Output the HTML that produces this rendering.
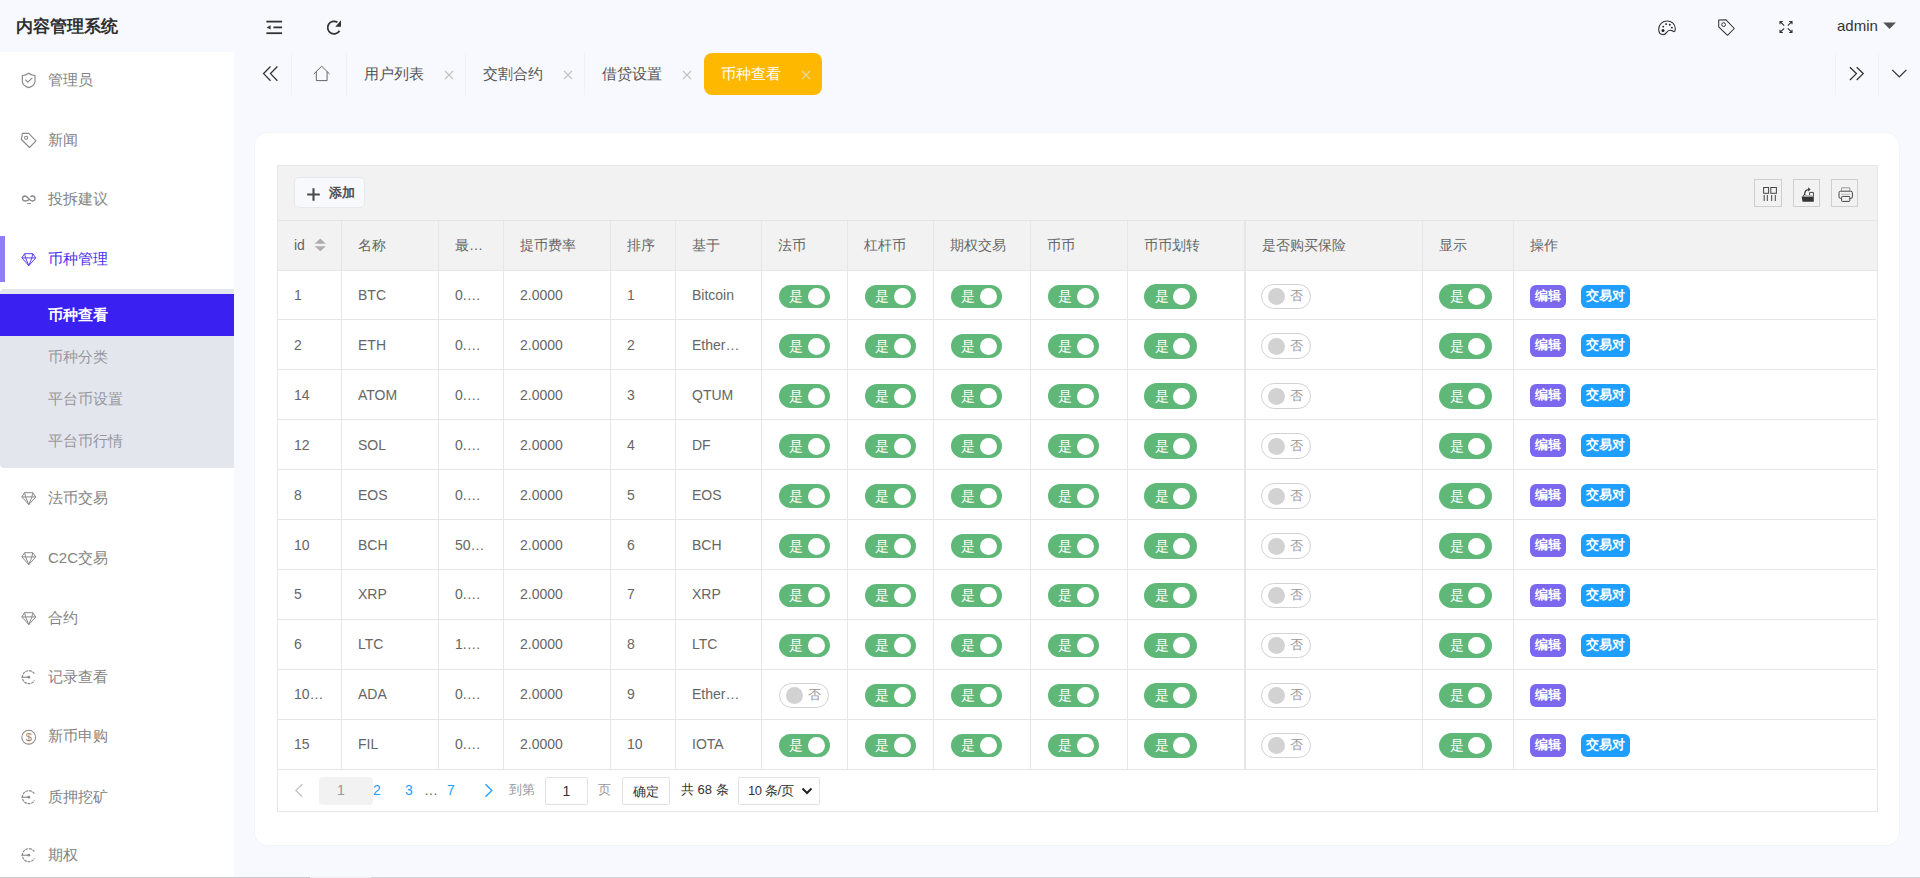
<!DOCTYPE html><html><head><meta charset="utf-8"><style>
*{margin:0;padding:0;box-sizing:border-box}
html,body{width:1920px;height:878px;overflow:hidden;background:#f8f9fe;font-family:"Liberation Sans",sans-serif;color:#666}
.a{position:absolute}
.nw{white-space:nowrap}
svg{position:absolute;overflow:visible}
#hdr{left:0;top:0;width:1920px;height:52px;background:#f8f9fe}
#logo{left:16px;top:15px;font-size:17px;font-weight:bold;color:#2f2f2f;line-height:24px;letter-spacing:0}
#side{left:0;top:52px;width:234px;height:826px;background:#fff}
.mi{left:48px;font-size:15px;line-height:20px;color:#838383}
.tab{top:53px;height:42px;line-height:42px;font-size:15px;color:#555}
.tx{color:#c2c2c2}
.div{width:1px;background:#f1f1f4;top:53px;height:42px}
#card{left:255px;top:133px;width:1644px;height:712px;background:#fff;border-radius:13px;box-shadow:0 0 0 1px #f3f4f8}
.vl{width:1px;background:#e6e6e6}
.hl{height:1px;background:#e6e6e6}
.th{top:221px;height:48px;line-height:48px;font-size:14px;color:#666}
.td{height:48px;line-height:48px;font-size:14px;color:#666;overflow:hidden;text-overflow:ellipsis;white-space:nowrap}
.swb{border-radius:13px;background:#5fb878}
.knob{width:17px;height:17px;border-radius:50%;background:#fff}
.swt{font-size:13.5px;line-height:24px;color:#fff}
.sfb{border-radius:13px;background:#fff;border:1px solid #d2d2d2}
.knoff{width:17px;height:17px;border-radius:50%;background:#d2d2d2}
.sft{font-size:13px;line-height:24px;color:#999}
.bt{height:23px;border-radius:6px;color:#fff;font-size:12.5px;font-weight:bold;line-height:22px;text-align:center}
</style></head><body>
<div id="hdr" class="a"></div>
<div id="logo" class="a nw">内容管理系统</div>
<svg style="left:262px;top:15px" width="24" height="24" viewBox="0 0 24 24"><g stroke="#333" stroke-width="1.8" fill="none"><line x1="4.4" y1="6.6" x2="20.1" y2="6.6"/><line x1="11.4" y1="12.4" x2="20.1" y2="12.4"/><line x1="4.4" y1="18.2" x2="20.1" y2="18.2"/></g><path d="M4.6 12.4 L8.6 10.2 L8.6 14.6 Z" fill="#333"/></svg>
<svg style="left:322px;top:15px" width="24" height="24" viewBox="0 0 24 24"><path d="M15.4 7.3 A6.3 6.3 0 1 0 17.5 15.7" stroke="#333" stroke-width="1.8" fill="none"/><path d="M19 5.2 L19 11.7 L13.3 11.7 Z" fill="#333"/></svg>
<svg style="left:1650px;top:10px" width="150" height="35" viewBox="1650 10 150 35"><path d="M1663.4 34.6 C1660.6 34.6 1658.7 32.4 1658.7 29.2 C1658.7 24.4 1662.4 21 1667.2 21 C1671.6 21 1675.3 24 1675.3 28.6 C1675.3 30.6 1674.8 31.6 1674 31.6 C1673 31.6 1672 30.3 1670.2 30.3 C1668.2 30.3 1667.2 31.4 1666.4 32.6 C1665.6 33.8 1664.7 34.6 1663.4 34.6 Z" stroke="#333" stroke-width="1.1" fill="none"/><circle cx="1663.3" cy="26.6" r="0.95" fill="#222"/><circle cx="1666.1" cy="24.1" r="0.95" fill="#222"/><circle cx="1669.8" cy="24.8" r="0.95" fill="#222"/><circle cx="1671.9" cy="27.6" r="0.95" fill="#222"/><circle cx="1663" cy="30.6" r="1.5" fill="#222"/><path d="M1718.7 19.9 L1725.8 19.7 L1734.3 28.5 L1727.5 35.3 L1718.7 26.8 Z" stroke="#333" stroke-width="1.05" fill="none" stroke-linejoin="round"/><circle cx="1723.6" cy="24.6" r="1.9" stroke="#333" stroke-width="1" fill="none"/><g stroke="#333" stroke-width="1.1" fill="none"><path d="M1782.8 21.5 H1780 V24.3 M1780 21.5 L1784.2 25.7"/><path d="M1789.2 21.5 H1792 V24.3 M1792 21.5 L1787.8 25.7"/><path d="M1782.8 32.5 H1780 V29.7 M1780 32.5 L1784.2 28.3"/><path d="M1789.2 32.5 H1792 V29.7 M1792 32.5 L1787.8 28.3"/></g></svg>
<div class="a nw" style="left:1837px;top:16px;font-size:15px;line-height:20px;color:#333">admin</div>
<svg style="left:1882px;top:22px" width="15" height="8" viewBox="0 0 15 8"><path d="M1.2 0.6 L13.9 0.6 L7.55 6.9 Z" fill="#555"/></svg>
<div id="side" class="a"></div>
<div class="a" style="left:0;top:236px;width:5px;height:46px;background:#8f7ef8"></div>
<svg style="left:19px;top:71px" width="18" height="18" viewBox="0 0 18 18"><path d="M9.7 2.3 C8 3.6 5.6 4.4 3.4 4.5 L3.4 10.4 C3.4 13.4 6.2 15.3 9.7 16.6 C13.2 15.3 16 13.4 16 10.4 L16 4.5 C13.8 4.4 11.4 3.6 9.7 2.3 Z" stroke="#8a8a8a" stroke-width="1.15" fill="none"/><path d="M6.3 8.7 L8.8 11.2 L13.4 6.9" stroke="#8a8a8a" stroke-width="1.15" fill="none"/></svg>
<div class="a mi nw" style="top:70px;color:#838383">管理员</div>
<svg style="left:19px;top:131px" width="18" height="18" viewBox="0 0 18 18"><path d="M3.4 2.4 L9.7 2.4 L17 9.8 L10.5 16.5 L2.4 8.5 Z" stroke="#8a8a8a" stroke-width="1.15" fill="none" stroke-linejoin="round"/><circle cx="7.1" cy="6.8" r="1.6" stroke="#8a8a8a" stroke-width="1.05" fill="none"/></svg>
<div class="a mi nw" style="top:130px;color:#838383">新闻</div>
<svg style="left:19px;top:190px" width="18" height="18" viewBox="0 0 18 18"><path d="M10.2 9.4 C9 10.5 7.8 11 6.2 11 C4.6 11 3.5 9.9 3.5 8.5 C3.5 7.1 4.6 6 6.2 6 C8.4 6 10.6 11 13.4 11 C15 11 16 9.9 16 8.5 C16 7.1 15 6 13.4 6 C12.6 6 12 6.3 11.4 6.8" stroke="#8a8a8a" stroke-width="1.3" fill="none"/><line x1="8.2" y1="13.5" x2="11.8" y2="13.5" stroke="#8a8a8a" stroke-width="1.1"/></svg>
<div class="a mi nw" style="top:189px;color:#838383">投拆建议</div>
<svg style="left:19px;top:249.5px" width="18" height="18" viewBox="0 0 18 18"><g stroke="#5a3ff2" stroke-width="1" fill="none" stroke-linejoin="round"><path d="M5.6 3.7 L13.7 3.7 L16.8 7.9 L9.8 15.6 L2.8 7.9 Z"/><path d="M2.8 7.9 L16.8 7.9"/><path d="M5.6 3.7 L6.6 7.9 L9.8 15.6 L12.9 7.9 L13.7 3.7"/></g></svg>
<div class="a mi nw" style="top:248.5px;color:#4a2ff0">币种管理</div>
<svg style="left:19px;top:489px" width="18" height="18" viewBox="0 0 18 18"><g stroke="#8a8a8a" stroke-width="1" fill="none" stroke-linejoin="round"><path d="M5.6 3.7 L13.7 3.7 L16.8 7.9 L9.8 15.6 L2.8 7.9 Z"/><path d="M2.8 7.9 L16.8 7.9"/><path d="M5.6 3.7 L6.6 7.9 L9.8 15.6 L12.9 7.9 L13.7 3.7"/></g></svg>
<div class="a mi nw" style="top:488px;color:#838383">法币交易</div>
<svg style="left:19px;top:549px" width="18" height="18" viewBox="0 0 18 18"><g stroke="#8a8a8a" stroke-width="1" fill="none" stroke-linejoin="round"><path d="M5.6 3.7 L13.7 3.7 L16.8 7.9 L9.8 15.6 L2.8 7.9 Z"/><path d="M2.8 7.9 L16.8 7.9"/><path d="M5.6 3.7 L6.6 7.9 L9.8 15.6 L12.9 7.9 L13.7 3.7"/></g></svg>
<div class="a mi nw" style="top:548px;color:#838383">C2C交易</div>
<svg style="left:19px;top:608.5px" width="18" height="18" viewBox="0 0 18 18"><g stroke="#8a8a8a" stroke-width="1" fill="none" stroke-linejoin="round"><path d="M5.6 3.7 L13.7 3.7 L16.8 7.9 L9.8 15.6 L2.8 7.9 Z"/><path d="M2.8 7.9 L16.8 7.9"/><path d="M5.6 3.7 L6.6 7.9 L9.8 15.6 L12.9 7.9 L13.7 3.7"/></g></svg>
<div class="a mi nw" style="top:607.5px;color:#838383">合约</div>
<svg style="left:19px;top:668px" width="18" height="18" viewBox="0 0 18 18"><path d="M15.4 5.8 A6.5 6.5 0 1 0 15.5 12.4" stroke="#8a8a8a" stroke-width="1.15" fill="none" stroke-dasharray="2.8 0.8"/><line x1="2.4" y1="9.2" x2="9.6" y2="9.2" stroke="#8a8a8a" stroke-width="1.15"/><circle cx="9.8" cy="9.2" r="1.4" fill="#8a8a8a"/></svg>
<div class="a mi nw" style="top:667px;color:#838383">记录查看</div>
<svg style="left:19px;top:727px" width="18" height="18" viewBox="0 0 18 18"><circle cx="9.7" cy="10.2" r="6.9" stroke="#8a8a8a" stroke-width="1.05" fill="none"/><text x="9.7" y="14.2" font-size="11" text-anchor="middle" fill="#8a8a8a" font-family="Liberation Sans">$</text></svg>
<div class="a mi nw" style="top:726px;color:#838383">新币申购</div>
<svg style="left:19px;top:787.5px" width="18" height="18" viewBox="0 0 18 18"><path d="M15.4 5.8 A6.5 6.5 0 1 0 15.5 12.4" stroke="#8a8a8a" stroke-width="1.15" fill="none" stroke-dasharray="2.8 0.8"/><line x1="2.4" y1="9.2" x2="9.6" y2="9.2" stroke="#8a8a8a" stroke-width="1.15"/><circle cx="9.8" cy="9.2" r="1.4" fill="#8a8a8a"/></svg>
<div class="a mi nw" style="top:786.5px;color:#838383">质押挖矿</div>
<svg style="left:19px;top:846px" width="18" height="18" viewBox="0 0 18 18"><path d="M15.4 5.8 A6.5 6.5 0 1 0 15.5 12.4" stroke="#8a8a8a" stroke-width="1.15" fill="none" stroke-dasharray="2.8 0.8"/><line x1="2.4" y1="9.2" x2="9.6" y2="9.2" stroke="#8a8a8a" stroke-width="1.15"/><circle cx="9.8" cy="9.2" r="1.4" fill="#8a8a8a"/></svg>
<div class="a mi nw" style="top:845px;color:#838383">期权</div>
<div class="a" style="left:0;top:289px;width:234px;height:179px;background:#e4e6ee;border-radius:4px 0 0 4px"></div>
<div class="a" style="left:0;top:294px;width:234px;height:42px;background:#3b20f2"></div>
<div class="a mi nw" style="top:305px;color:#fff;font-weight:bold">币种查看</div>
<div class="a mi nw" style="top:347px;color:#97989c">币种分类</div>
<div class="a mi nw" style="top:389px;color:#97989c">平台币设置</div>
<div class="a mi nw" style="top:431px;color:#97989c">平台币行情</div>
<svg style="left:260px;top:64px" width="20" height="20" viewBox="0 0 20 20"><g stroke="#333" stroke-width="1.3" fill="none"><path d="M10.5 2.5 L3.6 9.6 L10.5 16.7"/><path d="M17.4 2.5 L10.5 9.6 L17.4 16.7"/></g></svg>
<div class="a div" style="left:291px"></div>
<div class="a div" style="left:346px"></div>
<div class="a div" style="left:465px"></div>
<div class="a div" style="left:584px"></div>
<svg style="left:311px;top:63px" width="21" height="20" viewBox="0 0 21 20"><path d="M2.8 11 L10.7 3.2 L18.6 11" stroke="#666" stroke-width="1" fill="none"/><path d="M5.3 8.6 L5.3 17.6 L16.1 17.6 L16.1 8.6" stroke="#666" stroke-width="1" fill="none"/></svg>
<div class="a tab nw" style="left:363.5px">用户列表</div>
<svg style="left:443.5px;top:70px" width="10" height="10" viewBox="0 0 10 10"><path d="M1 1 L9 9 M9 1 L1 9" stroke="#c2c2c2" stroke-width="1.1"/></svg>
<div class="a tab nw" style="left:482.5px">交割合约</div>
<svg style="left:562.5px;top:70px" width="10" height="10" viewBox="0 0 10 10"><path d="M1 1 L9 9 M9 1 L1 9" stroke="#c2c2c2" stroke-width="1.1"/></svg>
<div class="a tab nw" style="left:601.5px">借贷设置</div>
<svg style="left:681.5px;top:70px" width="10" height="10" viewBox="0 0 10 10"><path d="M1 1 L9 9 M9 1 L1 9" stroke="#c2c2c2" stroke-width="1.1"/></svg>
<div class="a" style="left:704px;top:53px;width:118px;height:42px;background:#ffb800;border-radius:8px"></div>
<div class="a tab nw" style="left:721px;color:#fff">币种查看</div>
<svg style="left:801px;top:70px" width="10" height="10" viewBox="0 0 10 10"><path d="M1 1 L9 9 M9 1 L1 9" stroke="#e8d8a8" stroke-width="1.1"/></svg>
<div class="a div" style="left:1835px"></div><div class="a div" style="left:1878px"></div>
<svg style="left:1846px;top:64px" width="20" height="20" viewBox="0 0 20 20"><g stroke="#333" stroke-width="1.3" fill="none"><path d="M3.9 3.2 L10.4 9.6 L3.9 16"/><path d="M10.7 3.2 L17.2 9.6 L10.7 16"/></g></svg>
<svg style="left:1889px;top:64px" width="20" height="20" viewBox="0 0 20 20"><path d="M3.2 5.9 L10.3 12.9 L17.4 5.9" stroke="#333" stroke-width="1.3" fill="none"/></svg>
<div id="card" class="a"></div>
<div class="a" style="left:277px;top:165px;width:1601px;height:647px;border:1px solid #e6e6e6;background:#fff"></div>
<div class="a" style="left:278px;top:166px;width:1599px;height:104px;background:#f2f2f2"></div>
<div class="a hl" style="left:278px;top:220px;width:1599px"></div>
<div class="a hl" style="left:278px;top:270px;width:1599px"></div>
<div class="a hl" style="left:278px;top:319px;width:1598px"></div>
<div class="a hl" style="left:278px;top:369px;width:1598px"></div>
<div class="a hl" style="left:278px;top:419px;width:1598px"></div>
<div class="a hl" style="left:278px;top:469px;width:1598px"></div>
<div class="a hl" style="left:278px;top:519px;width:1598px"></div>
<div class="a hl" style="left:278px;top:569px;width:1598px"></div>
<div class="a hl" style="left:278px;top:619px;width:1598px"></div>
<div class="a hl" style="left:278px;top:669px;width:1598px"></div>
<div class="a hl" style="left:278px;top:719px;width:1598px"></div>
<div class="a hl" style="left:278px;top:769px;width:1598px"></div>
<div class="a vl" style="left:341px;top:221px;height:548px"></div>
<div class="a vl" style="left:438px;top:221px;height:548px"></div>
<div class="a vl" style="left:503px;top:221px;height:548px"></div>
<div class="a vl" style="left:610px;top:221px;height:548px"></div>
<div class="a vl" style="left:675px;top:221px;height:548px"></div>
<div class="a vl" style="left:761px;top:221px;height:548px"></div>
<div class="a vl" style="left:847px;top:221px;height:548px"></div>
<div class="a vl" style="left:933px;top:221px;height:548px"></div>
<div class="a vl" style="left:1030px;top:221px;height:548px"></div>
<div class="a vl" style="left:1127px;top:221px;height:548px"></div>
<div class="a vl" style="left:1244px;top:221px;height:548px"></div>
<div class="a vl" style="left:1422px;top:221px;height:548px"></div>
<div class="a vl" style="left:1513px;top:221px;height:548px"></div>
<div class="a vl" style="left:1245px;top:221px;height:548px"></div>
<div class="a" style="left:294px;top:177px;width:71px;height:31px;background:#f8f9fd;border:1px solid #e4eaec;border-radius:5px"></div>
<svg style="left:306px;top:186.5px" width="15" height="15" viewBox="0 0 15 15"><path d="M7.5 1.2 V13.8 M1.2 7.5 H13.8" stroke="#4a4a4a" stroke-width="2.1"/></svg>
<div class="a nw" style="left:329px;top:183px;font-size:13px;line-height:20px;color:#505050;font-weight:bold">添加</div>
<div class="a" style="left:1754px;top:179px;width:28px;height:28px;border:1px solid #cfcfcf"></div>
<div class="a" style="left:1793px;top:179px;width:27px;height:28px;border:1px solid #cfcfcf"></div>
<div class="a" style="left:1831px;top:179px;width:27px;height:28px;border:1px solid #cfcfcf"></div>
<svg style="left:1754px;top:179px" width="28" height="28" viewBox="1754 179 28 28"><g stroke="#444" stroke-width="1" fill="none"><rect x="1763.6" y="187.5" width="5" height="5.8"/><rect x="1770.8" y="187.5" width="5.6" height="5.8"/><path d="M1764.2 195 V201 M1767.3 195 V201 M1771.7 195 V201 M1775.3 195 V201"/></g></svg>
<svg style="left:1793px;top:179px" width="28" height="28" viewBox="1793 179 28 28"><path d="M1801.6 196.4 L1813.8 196.4 L1813.8 201.8 L1802.6 201.8 Z" fill="#333"/><path d="M1803.5 196.4 L1803.5 195.2 L1806 195.2 M1809.6 195.2 L1809.6 192.4 L1813.4 192.4 L1813.4 196.4" stroke="#444" stroke-width="1" fill="none"/><rect x="1804.2" y="195" width="8" height="1.4" fill="#bbb"/><path d="M1804.6 195 C1804.6 191.6 1806 189.6 1808.6 189.6" stroke="#333" stroke-width="1.2" fill="none"/><path d="M1808.2 187.3 L1810.6 189.4 L1808.2 191.6 Z" fill="#333"/></svg>
<svg style="left:1831px;top:179px" width="28" height="28" viewBox="1831 179 28 28"><g fill="none" stroke-width="1"><path d="M1841.6 190.8 V187.8 H1849.8 V190.8" stroke="#999"/><rect x="1839" y="191.2" width="13.4" height="7.2" rx="1.6" stroke="#444"/><path d="M1841 194.2 H1850.4" stroke="#bbb"/><rect x="1841.6" y="196.4" width="8.2" height="5" rx="0.8" stroke="#444" fill="#f2f2f2"/></g></svg>
<div class="a th nw" style="left:294px">id</div>
<div class="a th nw" style="left:358px">名称</div>
<div class="a th nw" style="left:455px">最…</div>
<div class="a th nw" style="left:520px">提币费率</div>
<div class="a th nw" style="left:627px">排序</div>
<div class="a th nw" style="left:692px">基于</div>
<div class="a th nw" style="left:778px">法币</div>
<div class="a th nw" style="left:864px">杠杆币</div>
<div class="a th nw" style="left:950px">期权交易</div>
<div class="a th nw" style="left:1047px">币币</div>
<div class="a th nw" style="left:1144px">币币划转</div>
<div class="a th nw" style="left:1262px">是否购买保险</div>
<div class="a th nw" style="left:1439px">显示</div>
<div class="a th nw" style="left:1530px">操作</div>
<svg style="left:314px;top:238px" width="13" height="14" viewBox="0 0 13 14"><path d="M6.3 0.6 L11.9 5.7 L0.7 5.7 Z M6.3 13.3 L11.9 8.3 L0.7 8.3 Z" fill="#adadad"/></svg>
<div class="a td" style="left:294px;top:271px;width:32px">1</div>
<div class="a td" style="left:358px;top:271px;width:65px">BTC</div>
<div class="a td" style="left:455px;top:271px;width:33px">0.0010</div>
<div class="a td" style="left:520px;top:271px;width:75px">2.0000</div>
<div class="a td" style="left:627px;top:271px;width:33px">1</div>
<div class="a td" style="left:692px;top:271px;width:54px">Bitcoin</div>
<div class="a swb" style="left:779px;top:285px;width:51px;height:23px"></div><div class="a knob" style="left:808px;top:288px"></div><div class="a swt" style="left:789px;top:285.0px">是</div>
<div class="a swb" style="left:865px;top:285px;width:51px;height:23px"></div><div class="a knob" style="left:894px;top:288px"></div><div class="a swt" style="left:875px;top:285.0px">是</div>
<div class="a swb" style="left:951px;top:285px;width:51px;height:23px"></div><div class="a knob" style="left:980px;top:288px"></div><div class="a swt" style="left:961px;top:285.0px">是</div>
<div class="a swb" style="left:1048px;top:285px;width:51px;height:23px"></div><div class="a knob" style="left:1077px;top:288px"></div><div class="a swt" style="left:1058px;top:285.0px">是</div>
<div class="a swb" style="left:1144px;top:284px;width:53px;height:25px"></div><div class="a knob" style="left:1173px;top:288px"></div><div class="a swt" style="left:1155px;top:285.0px">是</div>
<div class="a sfb" style="left:1261px;top:284px;width:50px;height:25px"></div><div class="a knoff" style="left:1268px;top:288px"></div><div class="a sft" style="left:1290px;top:284.0px">否</div>
<div class="a swb" style="left:1439px;top:284px;width:53px;height:25px"></div><div class="a knob" style="left:1468px;top:288px"></div><div class="a swt" style="left:1450px;top:285.0px">是</div>
<div class="a bt" style="left:1530px;top:285px;width:36px;background:#7b68ee">编辑</div>
<div class="a bt" style="left:1581px;top:285px;width:49px;background:#1e9fff">交易对</div>
<div class="a td" style="left:294px;top:321px;width:32px">2</div>
<div class="a td" style="left:358px;top:321px;width:65px">ETH</div>
<div class="a td" style="left:455px;top:321px;width:33px">0.0100</div>
<div class="a td" style="left:520px;top:321px;width:75px">2.0000</div>
<div class="a td" style="left:627px;top:321px;width:33px">2</div>
<div class="a td" style="left:692px;top:321px;width:54px">Ethereum</div>
<div class="a swb" style="left:779px;top:334px;width:51px;height:24px"></div><div class="a knob" style="left:808px;top:338px"></div><div class="a swt" style="left:789px;top:335.0px">是</div>
<div class="a swb" style="left:865px;top:334px;width:51px;height:24px"></div><div class="a knob" style="left:894px;top:338px"></div><div class="a swt" style="left:875px;top:335.0px">是</div>
<div class="a swb" style="left:951px;top:334px;width:51px;height:24px"></div><div class="a knob" style="left:980px;top:338px"></div><div class="a swt" style="left:961px;top:335.0px">是</div>
<div class="a swb" style="left:1048px;top:334px;width:51px;height:24px"></div><div class="a knob" style="left:1077px;top:338px"></div><div class="a swt" style="left:1058px;top:335.0px">是</div>
<div class="a swb" style="left:1144px;top:333px;width:53px;height:26px"></div><div class="a knob" style="left:1173px;top:338px"></div><div class="a swt" style="left:1155px;top:335.0px">是</div>
<div class="a sfb" style="left:1261px;top:333px;width:50px;height:26px"></div><div class="a knoff" style="left:1268px;top:338px"></div><div class="a sft" style="left:1290px;top:334.0px">否</div>
<div class="a swb" style="left:1439px;top:333px;width:53px;height:26px"></div><div class="a knob" style="left:1468px;top:338px"></div><div class="a swt" style="left:1450px;top:335.0px">是</div>
<div class="a bt" style="left:1530px;top:334px;width:36px;background:#7b68ee">编辑</div>
<div class="a bt" style="left:1581px;top:334px;width:49px;background:#1e9fff">交易对</div>
<div class="a td" style="left:294px;top:371px;width:32px">14</div>
<div class="a td" style="left:358px;top:371px;width:65px">ATOM</div>
<div class="a td" style="left:455px;top:371px;width:33px">0.0100</div>
<div class="a td" style="left:520px;top:371px;width:75px">2.0000</div>
<div class="a td" style="left:627px;top:371px;width:33px">3</div>
<div class="a td" style="left:692px;top:371px;width:54px">QTUM</div>
<div class="a swb" style="left:779px;top:384px;width:51px;height:24px"></div><div class="a knob" style="left:808px;top:388px"></div><div class="a swt" style="left:789px;top:385.0px">是</div>
<div class="a swb" style="left:865px;top:384px;width:51px;height:24px"></div><div class="a knob" style="left:894px;top:388px"></div><div class="a swt" style="left:875px;top:385.0px">是</div>
<div class="a swb" style="left:951px;top:384px;width:51px;height:24px"></div><div class="a knob" style="left:980px;top:388px"></div><div class="a swt" style="left:961px;top:385.0px">是</div>
<div class="a swb" style="left:1048px;top:384px;width:51px;height:24px"></div><div class="a knob" style="left:1077px;top:388px"></div><div class="a swt" style="left:1058px;top:385.0px">是</div>
<div class="a swb" style="left:1144px;top:383px;width:53px;height:26px"></div><div class="a knob" style="left:1173px;top:388px"></div><div class="a swt" style="left:1155px;top:385.0px">是</div>
<div class="a sfb" style="left:1261px;top:383px;width:50px;height:26px"></div><div class="a knoff" style="left:1268px;top:388px"></div><div class="a sft" style="left:1290px;top:384.0px">否</div>
<div class="a swb" style="left:1439px;top:383px;width:53px;height:26px"></div><div class="a knob" style="left:1468px;top:388px"></div><div class="a swt" style="left:1450px;top:385.0px">是</div>
<div class="a bt" style="left:1530px;top:384px;width:36px;background:#7b68ee">编辑</div>
<div class="a bt" style="left:1581px;top:384px;width:49px;background:#1e9fff">交易对</div>
<div class="a td" style="left:294px;top:421px;width:32px">12</div>
<div class="a td" style="left:358px;top:421px;width:65px">SOL</div>
<div class="a td" style="left:455px;top:421px;width:33px">0.0100</div>
<div class="a td" style="left:520px;top:421px;width:75px">2.0000</div>
<div class="a td" style="left:627px;top:421px;width:33px">4</div>
<div class="a td" style="left:692px;top:421px;width:54px">DF</div>
<div class="a swb" style="left:779px;top:434px;width:51px;height:24px"></div><div class="a knob" style="left:808px;top:438px"></div><div class="a swt" style="left:789px;top:435.0px">是</div>
<div class="a swb" style="left:865px;top:434px;width:51px;height:24px"></div><div class="a knob" style="left:894px;top:438px"></div><div class="a swt" style="left:875px;top:435.0px">是</div>
<div class="a swb" style="left:951px;top:434px;width:51px;height:24px"></div><div class="a knob" style="left:980px;top:438px"></div><div class="a swt" style="left:961px;top:435.0px">是</div>
<div class="a swb" style="left:1048px;top:434px;width:51px;height:24px"></div><div class="a knob" style="left:1077px;top:438px"></div><div class="a swt" style="left:1058px;top:435.0px">是</div>
<div class="a swb" style="left:1144px;top:433px;width:53px;height:26px"></div><div class="a knob" style="left:1173px;top:438px"></div><div class="a swt" style="left:1155px;top:435.0px">是</div>
<div class="a sfb" style="left:1261px;top:433px;width:50px;height:26px"></div><div class="a knoff" style="left:1268px;top:438px"></div><div class="a sft" style="left:1290px;top:434.0px">否</div>
<div class="a swb" style="left:1439px;top:433px;width:53px;height:26px"></div><div class="a knob" style="left:1468px;top:438px"></div><div class="a swt" style="left:1450px;top:435.0px">是</div>
<div class="a bt" style="left:1530px;top:434px;width:36px;background:#7b68ee">编辑</div>
<div class="a bt" style="left:1581px;top:434px;width:49px;background:#1e9fff">交易对</div>
<div class="a td" style="left:294px;top:471px;width:32px">8</div>
<div class="a td" style="left:358px;top:471px;width:65px">EOS</div>
<div class="a td" style="left:455px;top:471px;width:33px">0.0100</div>
<div class="a td" style="left:520px;top:471px;width:75px">2.0000</div>
<div class="a td" style="left:627px;top:471px;width:33px">5</div>
<div class="a td" style="left:692px;top:471px;width:54px">EOS</div>
<div class="a swb" style="left:779px;top:484px;width:51px;height:24px"></div><div class="a knob" style="left:808px;top:488px"></div><div class="a swt" style="left:789px;top:485.0px">是</div>
<div class="a swb" style="left:865px;top:484px;width:51px;height:24px"></div><div class="a knob" style="left:894px;top:488px"></div><div class="a swt" style="left:875px;top:485.0px">是</div>
<div class="a swb" style="left:951px;top:484px;width:51px;height:24px"></div><div class="a knob" style="left:980px;top:488px"></div><div class="a swt" style="left:961px;top:485.0px">是</div>
<div class="a swb" style="left:1048px;top:484px;width:51px;height:24px"></div><div class="a knob" style="left:1077px;top:488px"></div><div class="a swt" style="left:1058px;top:485.0px">是</div>
<div class="a swb" style="left:1144px;top:483px;width:53px;height:26px"></div><div class="a knob" style="left:1173px;top:488px"></div><div class="a swt" style="left:1155px;top:485.0px">是</div>
<div class="a sfb" style="left:1261px;top:483px;width:50px;height:26px"></div><div class="a knoff" style="left:1268px;top:488px"></div><div class="a sft" style="left:1290px;top:484.0px">否</div>
<div class="a swb" style="left:1439px;top:483px;width:53px;height:26px"></div><div class="a knob" style="left:1468px;top:488px"></div><div class="a swt" style="left:1450px;top:485.0px">是</div>
<div class="a bt" style="left:1530px;top:484px;width:36px;background:#7b68ee">编辑</div>
<div class="a bt" style="left:1581px;top:484px;width:49px;background:#1e9fff">交易对</div>
<div class="a td" style="left:294px;top:521px;width:32px">10</div>
<div class="a td" style="left:358px;top:521px;width:65px">BCH</div>
<div class="a td" style="left:455px;top:521px;width:33px">50.000</div>
<div class="a td" style="left:520px;top:521px;width:75px">2.0000</div>
<div class="a td" style="left:627px;top:521px;width:33px">6</div>
<div class="a td" style="left:692px;top:521px;width:54px">BCH</div>
<div class="a swb" style="left:779px;top:534px;width:51px;height:24px"></div><div class="a knob" style="left:808px;top:538px"></div><div class="a swt" style="left:789px;top:535.0px">是</div>
<div class="a swb" style="left:865px;top:534px;width:51px;height:24px"></div><div class="a knob" style="left:894px;top:538px"></div><div class="a swt" style="left:875px;top:535.0px">是</div>
<div class="a swb" style="left:951px;top:534px;width:51px;height:24px"></div><div class="a knob" style="left:980px;top:538px"></div><div class="a swt" style="left:961px;top:535.0px">是</div>
<div class="a swb" style="left:1048px;top:534px;width:51px;height:24px"></div><div class="a knob" style="left:1077px;top:538px"></div><div class="a swt" style="left:1058px;top:535.0px">是</div>
<div class="a swb" style="left:1144px;top:533px;width:53px;height:26px"></div><div class="a knob" style="left:1173px;top:538px"></div><div class="a swt" style="left:1155px;top:535.0px">是</div>
<div class="a sfb" style="left:1261px;top:533px;width:50px;height:26px"></div><div class="a knoff" style="left:1268px;top:538px"></div><div class="a sft" style="left:1290px;top:534.0px">否</div>
<div class="a swb" style="left:1439px;top:533px;width:53px;height:26px"></div><div class="a knob" style="left:1468px;top:538px"></div><div class="a swt" style="left:1450px;top:535.0px">是</div>
<div class="a bt" style="left:1530px;top:534px;width:36px;background:#7b68ee">编辑</div>
<div class="a bt" style="left:1581px;top:534px;width:49px;background:#1e9fff">交易对</div>
<div class="a td" style="left:294px;top:570px;width:32px">5</div>
<div class="a td" style="left:358px;top:570px;width:65px">XRP</div>
<div class="a td" style="left:455px;top:570px;width:33px">0.0100</div>
<div class="a td" style="left:520px;top:570px;width:75px">2.0000</div>
<div class="a td" style="left:627px;top:570px;width:33px">7</div>
<div class="a td" style="left:692px;top:570px;width:54px">XRP</div>
<div class="a swb" style="left:779px;top:584px;width:51px;height:23px"></div><div class="a knob" style="left:808px;top:587px"></div><div class="a swt" style="left:789px;top:584.0px">是</div>
<div class="a swb" style="left:865px;top:584px;width:51px;height:23px"></div><div class="a knob" style="left:894px;top:587px"></div><div class="a swt" style="left:875px;top:584.0px">是</div>
<div class="a swb" style="left:951px;top:584px;width:51px;height:23px"></div><div class="a knob" style="left:980px;top:587px"></div><div class="a swt" style="left:961px;top:584.0px">是</div>
<div class="a swb" style="left:1048px;top:584px;width:51px;height:23px"></div><div class="a knob" style="left:1077px;top:587px"></div><div class="a swt" style="left:1058px;top:584.0px">是</div>
<div class="a swb" style="left:1144px;top:583px;width:53px;height:25px"></div><div class="a knob" style="left:1173px;top:587px"></div><div class="a swt" style="left:1155px;top:584.0px">是</div>
<div class="a sfb" style="left:1261px;top:583px;width:50px;height:25px"></div><div class="a knoff" style="left:1268px;top:587px"></div><div class="a sft" style="left:1290px;top:583.0px">否</div>
<div class="a swb" style="left:1439px;top:583px;width:53px;height:25px"></div><div class="a knob" style="left:1468px;top:587px"></div><div class="a swt" style="left:1450px;top:584.0px">是</div>
<div class="a bt" style="left:1530px;top:584px;width:36px;background:#7b68ee">编辑</div>
<div class="a bt" style="left:1581px;top:584px;width:49px;background:#1e9fff">交易对</div>
<div class="a td" style="left:294px;top:620px;width:32px">6</div>
<div class="a td" style="left:358px;top:620px;width:65px">LTC</div>
<div class="a td" style="left:455px;top:620px;width:33px">1.0000</div>
<div class="a td" style="left:520px;top:620px;width:75px">2.0000</div>
<div class="a td" style="left:627px;top:620px;width:33px">8</div>
<div class="a td" style="left:692px;top:620px;width:54px">LTC</div>
<div class="a swb" style="left:779px;top:634px;width:51px;height:23px"></div><div class="a knob" style="left:808px;top:637px"></div><div class="a swt" style="left:789px;top:634.0px">是</div>
<div class="a swb" style="left:865px;top:634px;width:51px;height:23px"></div><div class="a knob" style="left:894px;top:637px"></div><div class="a swt" style="left:875px;top:634.0px">是</div>
<div class="a swb" style="left:951px;top:634px;width:51px;height:23px"></div><div class="a knob" style="left:980px;top:637px"></div><div class="a swt" style="left:961px;top:634.0px">是</div>
<div class="a swb" style="left:1048px;top:634px;width:51px;height:23px"></div><div class="a knob" style="left:1077px;top:637px"></div><div class="a swt" style="left:1058px;top:634.0px">是</div>
<div class="a swb" style="left:1144px;top:633px;width:53px;height:25px"></div><div class="a knob" style="left:1173px;top:637px"></div><div class="a swt" style="left:1155px;top:634.0px">是</div>
<div class="a sfb" style="left:1261px;top:633px;width:50px;height:25px"></div><div class="a knoff" style="left:1268px;top:637px"></div><div class="a sft" style="left:1290px;top:633.0px">否</div>
<div class="a swb" style="left:1439px;top:633px;width:53px;height:25px"></div><div class="a knob" style="left:1468px;top:637px"></div><div class="a swt" style="left:1450px;top:634.0px">是</div>
<div class="a bt" style="left:1530px;top:634px;width:36px;background:#7b68ee">编辑</div>
<div class="a bt" style="left:1581px;top:634px;width:49px;background:#1e9fff">交易对</div>
<div class="a td" style="left:294px;top:670px;width:32px">10000</div>
<div class="a td" style="left:358px;top:670px;width:65px">ADA</div>
<div class="a td" style="left:455px;top:670px;width:33px">0.0100</div>
<div class="a td" style="left:520px;top:670px;width:75px">2.0000</div>
<div class="a td" style="left:627px;top:670px;width:33px">9</div>
<div class="a td" style="left:692px;top:670px;width:54px">Ethereum</div>
<div class="a sfb" style="left:779px;top:683px;width:50px;height:25px"></div><div class="a knoff" style="left:786px;top:687px"></div><div class="a sft" style="left:808px;top:683.0px">否</div>
<div class="a swb" style="left:865px;top:684px;width:51px;height:23px"></div><div class="a knob" style="left:894px;top:687px"></div><div class="a swt" style="left:875px;top:684.0px">是</div>
<div class="a swb" style="left:951px;top:684px;width:51px;height:23px"></div><div class="a knob" style="left:980px;top:687px"></div><div class="a swt" style="left:961px;top:684.0px">是</div>
<div class="a swb" style="left:1048px;top:684px;width:51px;height:23px"></div><div class="a knob" style="left:1077px;top:687px"></div><div class="a swt" style="left:1058px;top:684.0px">是</div>
<div class="a swb" style="left:1144px;top:683px;width:53px;height:25px"></div><div class="a knob" style="left:1173px;top:687px"></div><div class="a swt" style="left:1155px;top:684.0px">是</div>
<div class="a sfb" style="left:1261px;top:683px;width:50px;height:25px"></div><div class="a knoff" style="left:1268px;top:687px"></div><div class="a sft" style="left:1290px;top:683.0px">否</div>
<div class="a swb" style="left:1439px;top:683px;width:53px;height:25px"></div><div class="a knob" style="left:1468px;top:687px"></div><div class="a swt" style="left:1450px;top:684.0px">是</div>
<div class="a bt" style="left:1530px;top:684px;width:36px;background:#7b68ee">编辑</div>
<div class="a td" style="left:294px;top:720px;width:32px">15</div>
<div class="a td" style="left:358px;top:720px;width:65px">FIL</div>
<div class="a td" style="left:455px;top:720px;width:33px">0.0100</div>
<div class="a td" style="left:520px;top:720px;width:75px">2.0000</div>
<div class="a td" style="left:627px;top:720px;width:33px">10</div>
<div class="a td" style="left:692px;top:720px;width:54px">IOTA</div>
<div class="a swb" style="left:779px;top:734px;width:51px;height:23px"></div><div class="a knob" style="left:808px;top:737px"></div><div class="a swt" style="left:789px;top:734.0px">是</div>
<div class="a swb" style="left:865px;top:734px;width:51px;height:23px"></div><div class="a knob" style="left:894px;top:737px"></div><div class="a swt" style="left:875px;top:734.0px">是</div>
<div class="a swb" style="left:951px;top:734px;width:51px;height:23px"></div><div class="a knob" style="left:980px;top:737px"></div><div class="a swt" style="left:961px;top:734.0px">是</div>
<div class="a swb" style="left:1048px;top:734px;width:51px;height:23px"></div><div class="a knob" style="left:1077px;top:737px"></div><div class="a swt" style="left:1058px;top:734.0px">是</div>
<div class="a swb" style="left:1144px;top:733px;width:53px;height:25px"></div><div class="a knob" style="left:1173px;top:737px"></div><div class="a swt" style="left:1155px;top:734.0px">是</div>
<div class="a sfb" style="left:1261px;top:733px;width:50px;height:25px"></div><div class="a knoff" style="left:1268px;top:737px"></div><div class="a sft" style="left:1290px;top:733.0px">否</div>
<div class="a swb" style="left:1439px;top:733px;width:53px;height:25px"></div><div class="a knob" style="left:1468px;top:737px"></div><div class="a swt" style="left:1450px;top:734.0px">是</div>
<div class="a bt" style="left:1530px;top:734px;width:36px;background:#7b68ee">编辑</div>
<div class="a bt" style="left:1581px;top:734px;width:49px;background:#1e9fff">交易对</div>
<svg style="left:292px;top:782px" width="14" height="17" viewBox="0 0 14 17"><path d="M10.2 2.2 L3.9 8.5 L10.2 14.8" stroke="#c2c2c2" stroke-width="1.3" fill="none"/></svg>
<div class="a" style="left:319px;top:777px;width:54px;height:28px;background:#f2f2f2;border-radius:4px;line-height:27px;font-size:14px;color:#999;padding-left:18px">1</div>
<div class="a nw" style="left:373px;top:780px;font-size:14px;line-height:20px;color:#1e9fff">2</div>
<div class="a nw" style="left:405px;top:780px;font-size:14px;line-height:20px;color:#1e9fff">3</div>
<div class="a nw" style="left:424px;top:780px;font-size:14px;line-height:20px;color:#666">…</div>
<div class="a nw" style="left:447px;top:780px;font-size:14px;line-height:20px;color:#1e9fff">7</div>
<svg style="left:482px;top:782px" width="14" height="17" viewBox="0 0 14 17"><path d="M3.5 2.2 L9.8 8.5 L3.5 14.8" stroke="#1e9fff" stroke-width="1.3" fill="none"/></svg>
<div class="a nw" style="left:509px;top:780px;font-size:13px;line-height:20px;color:#999">到第</div>
<div class="a" style="left:545px;top:777px;width:43px;height:28px;border:1px solid #e2e2e2;border-radius:2px;text-align:center;line-height:26px;font-size:14px;color:#333">1</div>
<div class="a nw" style="left:598px;top:780px;font-size:13px;line-height:20px;color:#999">页</div>
<div class="a" style="left:622px;top:777px;width:48px;height:28px;border:1px solid #e2e2e2;border-radius:2px;text-align:center;line-height:28px;font-size:13px;color:#333">确定</div>
<div class="a nw" style="left:681px;top:780px;font-size:13px;line-height:20px;color:#333">共 68 条</div>
<div class="a" style="left:738px;top:777px;width:82px;height:28px;border:1px solid #e2e2e2;border-radius:2px"></div>
<div class="a nw" style="left:748px;top:781px;font-size:13px;line-height:20px;color:#333;letter-spacing:-0.4px">10 条/页</div>
<svg style="left:801px;top:786px" width="12" height="10" viewBox="0 0 12 10"><path d="M1.5 2.5 L6 7 L10.5 2.5" stroke="#222" stroke-width="2" fill="none"/></svg>
<div class="a" style="left:0;top:877px;width:310px;height:1px;background:#c9c9cc"></div><div class="a" style="left:310px;top:877px;width:61px;height:1px;background:#ececee"></div><div class="a" style="left:371px;top:877px;width:1549px;height:1px;background:#d2d7db"></div>
</body></html>
